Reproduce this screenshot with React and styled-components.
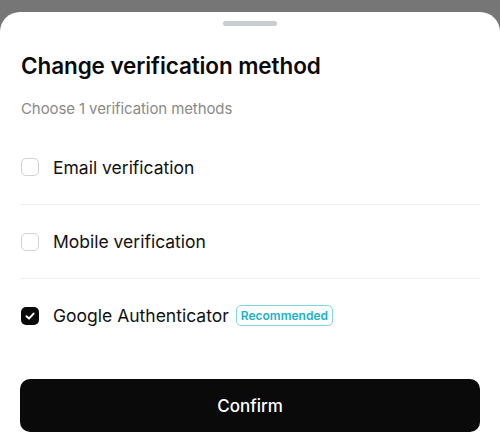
import React, { useState } from "react";
import styled, { createGlobalStyle } from "styled-components";

const Global = createGlobalStyle`
  html, body { margin: 0; padding: 0; background: #767676; }
  body { font-family: Inter, "Noto Sans", sans-serif; -webkit-font-smoothing: antialiased; }
  * { box-sizing: border-box; }
`;

const Backdrop = styled.div`
  width: 500px;
  height: 436px;
  padding-top: 12px;
  background: #767676;
  overflow: hidden;
`;

const Sheet = styled.div`
  background: #fff;
  border-radius: 20px 20px 0 0;
  height: 424px;
  padding: 9px 20px 0;
  display: flex;
  flex-direction: column;
`;

const Handle = styled.div`
  width: 54px;
  height: 5px;
  border-radius: 3px;
  background: #c9cdd1;
  align-self: center;
`;

const Title = styled.h2`
  margin: 26px 0 0 1px;
  font-size: 22.5px;
  font-weight: 600;
  color: #0a0a0a;
  line-height: 28px;
  letter-spacing: -0.1px;
`;

const Subtitle = styled.p`
  margin: 19px 0 0 1px;
  font-size: 15px;
  color: #8a8a8a;
  line-height: 20px;
  letter-spacing: -0.1px;
`;

const List = styled.div`
  margin-top: 11px;
  display: flex;
  flex-direction: column;
`;

const Row = styled.label`
  display: flex;
  align-items: center;
  gap: 14px;
  height: 74px;
  padding-left: 1px;
  border-top: ${(p) => (p.$first ? "none" : "1px solid #efefef")};
  cursor: pointer;
`;

const Box = styled.span`
  width: 18px;
  height: 18px;
  border-radius: 5px;
  border: ${(p) => (p.$checked ? "none" : "1.5px solid #d2d2d2")};
  background: ${(p) => (p.$checked ? "#0a0a0a" : "#fff")};
  display: flex;
  align-items: center;
  justify-content: center;
  flex-shrink: 0;
`;

const Label = styled.span`
  font-size: 17.5px;
  color: #111;
  font-weight: 400;
`;

const Badge = styled.span`
  margin-left: -7px;
  font-size: 12px;
  font-weight: 600;
  color: #18b2c9;
  border: 1.5px solid #7fd6e3;
  border-radius: 5px;
  padding: 2px 4px;
  line-height: 15px;
`;

const Button = styled.button`
  margin-top: auto;
  margin-bottom: 4px;
  height: 53px;
  border: none;
  border-radius: 10px;
  background: #0a0a0a;
  color: #fff;
  font-family: inherit;
  font-size: 17px;
  font-weight: 500;
`;

const Check = () => (
  <svg width="12" height="12" viewBox="0 0 12 12">
    <path d="M2.5 6.2 L5 8.6 L9.6 3.6" fill="none" stroke="#fff" strokeWidth="2" strokeLinecap="round" strokeLinejoin="round" />
  </svg>
);

const options = [
  { id: "email", label: "Email verification" },
  { id: "mobile", label: "Mobile verification" },
  { id: "google", label: "Google Authenticator", badge: "Recommended" },
];

export default function App() {
  const [selected, setSelected] = useState("google");
  return (
    <>
      <Global />
      <Backdrop>
        <Sheet>
          <Handle />
          <Title>Change verification method</Title>
          <Subtitle>Choose 1 verification methods</Subtitle>
          <List>
            {options.map((o, i) => (
              <Row key={o.id} $first={i === 0} onClick={() => setSelected(o.id)}>
                <Box $checked={selected === o.id}>{selected === o.id && <Check />}</Box>
                <Label>{o.label}</Label>
                {o.badge && <Badge>{o.badge}</Badge>}
              </Row>
            ))}
          </List>
          <Button>Confirm</Button>
        </Sheet>
      </Backdrop>
    </>
  );
}
